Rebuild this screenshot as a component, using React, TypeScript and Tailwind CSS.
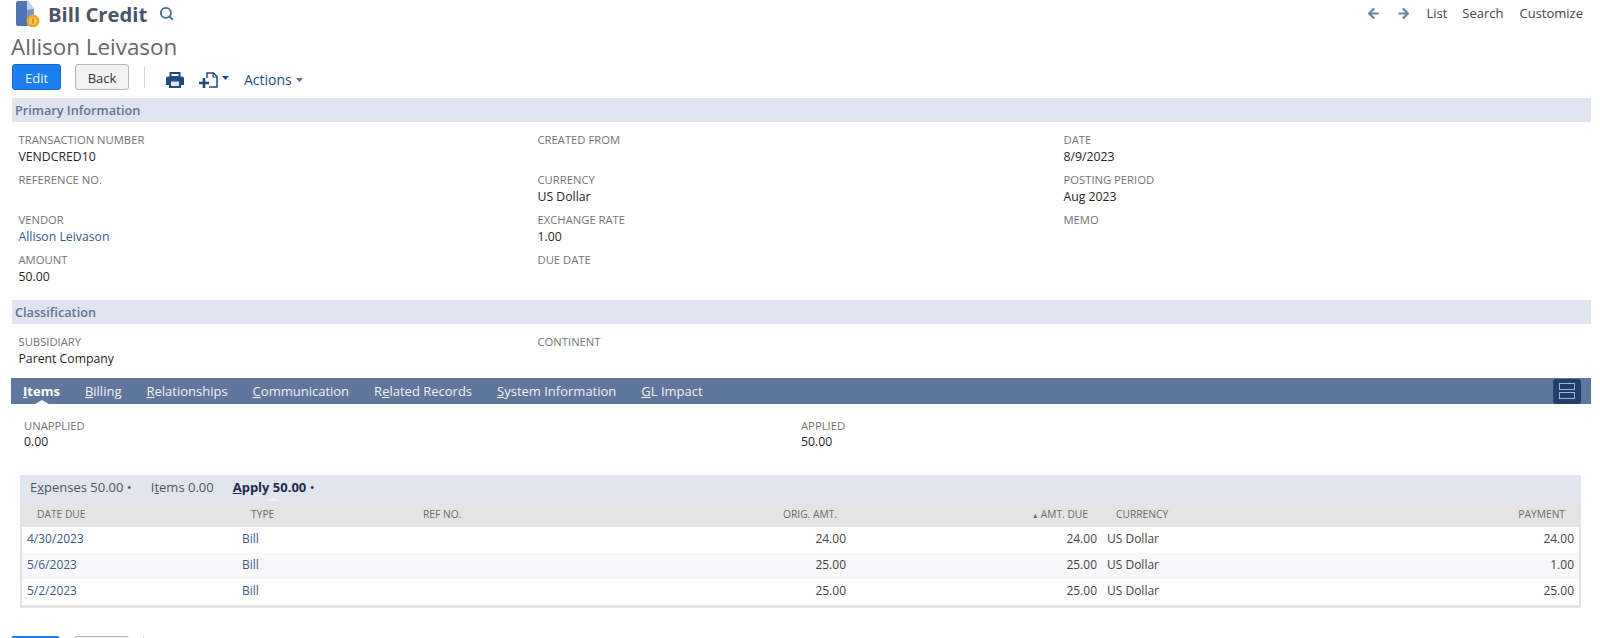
import { Search, ArrowLeft, ArrowRight } from "lucide-react"

const font = { fontFamily: '"Open Sans", sans-serif' }

function Field({ label, value, link }: { label: string; value?: string; link?: boolean }) {
  return (
    <div className="h-10 pt-[10px]">
      <div className="text-[11.25px] leading-[16px] text-[#737373] uppercase">{label}</div>
      {value && <div className={"mt-px text-[12.25px] leading-[16px] " + (link ? "text-[#2f5a94]" : "text-[#262626]")}>{value}</div>}
    </div>
  )
}

function SectionBar({ title }: { title: string }) {
  return (
    <div className="h-6 ml-3 mr-[9px] pl-[3px] bg-[#e0e4ef] text-[12.7px] leading-6 font-semibold text-[#5f7397]">{title}</div>
  )
}

function Tab({ first, rest, pre, active }: { pre?: string; first: string; rest: string; active?: boolean }) {
  return (
    <span className={"text-[13px] leading-[26px] " + (active ? "font-bold text-white" : "text-[#f0f3f8]")}>
      {pre}<u>{first}</u>{rest}
    </span>
  )
}

function DocIcon() {
  return (
    <svg width="24" height="26" viewBox="0 0 24 26">
      <path d="M0 2a2 2 0 0 1 2-2h9v25H2a2 2 0 0 1-2-2z" fill="#4f76b3" />
      <path d="M11 0h1l6 8v8l-5 9h-2z" fill="#7297cc" />
      <path d="M11 0h1l6 8-7 1z" fill="#c6d2e6" />
      <circle cx="17" cy="20" r="6.500" fill="#f0a623" />
      <circle cx="17" cy="20" r="4" fill="#f7c155" />
      <rect x="16" y="17" width="2" height="6" rx="1" fill="#e8981a" />
    </svg>
  )
}

function PrinterIcon() {
  return (
    <svg width="18" height="16" viewBox="0 0 18 16">
      <path d="M4.500 1h9v4h-9z" fill="none" stroke="#1f4a85" strokeWidth="2" />
      <path d="M2 4.500h14a2 2 0 0 1 2 2V13h-3v3H3v-3H0V6.500a2 2 0 0 1 2-2z" fill="#1f4a85" />
      <rect x="5" y="9.500" width="8" height="4.500" fill="#dfe6f1" />
    </svg>
  )
}

function NewDocIcon() {
  return (
    <svg width="20" height="16" viewBox="0 0 20 16" fill="none" stroke="#1f4a85">
      <path d="M8 6V1h6.500L18 4.500V15H10" strokeWidth="1.500" />
      <path d="M14 1v4h4" strokeWidth="1.200" />
      <path d="M0 11h10M5 6v10" strokeWidth="2.600" />
    </svg>
  )
}

function Caret({ color = "#1f4a85" }: { color?: string }) {
  return (
    <svg width="7" height="4" viewBox="0 0 7 4"><path d="M0 0h7L3.500 4z" fill={color} /></svg>
  )
}

const rows = [
  { date: "4/30/2023", orig: "24.00", due: "24.00", pay: "24.00" },
  { date: "5/6/2023", orig: "25.00", due: "25.00", pay: "1.00" },
  { date: "5/2/2023", orig: "25.00", due: "25.00", pay: "25.00" },
]

export default function App() {
  return (
    <div className="h-[638px] overflow-hidden bg-white" style={font}>
      <div className="flex items-center justify-between h-[27px] pl-4 pr-[17px]">
        <div className="flex items-center">
          <DocIcon />
          <span className="ml-2 text-[20.25px] leading-[24px] font-bold text-[#4a5568]">Bill Credit</span>
          <Search size={15} strokeWidth={3} className="ml-3 text-[#45699b]" />
        </div>
        <div className="flex items-center text-[13px] text-[#444]">
          <ArrowLeft size={15} strokeWidth={3.5} className="text-[#6a84a8]" />
          <ArrowRight size={15} strokeWidth={3.5} className="ml-[15px] text-[#6a84a8]" />
          <span className="ml-[15px]">List</span>
          <span className="ml-[15px]">Search</span>
          <span className="ml-4">Customize</span>
        </div>
      </div>

      <div className="h-[37px] pl-[11px] text-[22.4px] leading-[40px] text-[#666]">Allison Leivason</div>

      <div className="flex items-center h-[34px] pl-3 pb-2">
        <button className="w-[49px] h-[26px] pt-[3px] rounded-[3px] bg-[#1b7ff0] border border-[#1467c9] text-[13px] font-medium text-[#e8f2ff]">Edit</button>
        <button className="ml-[14px] w-[54px] h-[26px] pt-[3px] rounded-[3px] bg-[#f2f2f2] border border-[#b5b5b5] text-[13px] font-medium text-[#333]">Back</button>
        <div className="ml-[15px] w-px h-[22px] bg-[#d5d5d5]" />
        <div className="flex items-center h-full pt-[5px]">
          <div className="ml-[21px]"><PrinterIcon /></div>
          <div className="ml-[15px]"><NewDocIcon /></div>
          <div className="ml-[3px] mb-[3px]"><Caret /></div>
          <span className="ml-[15px] text-[14px] font-medium text-[#1f4a85]">Actions</span>
          <div className="ml-1"><Caret color="#5a6a8a" /></div>
        </div>
      </div>

      <SectionBar title="Primary Information" />
      <div className="grid grid-cols-[519px_526px_1fr] pl-[18.5px] h-[178px]">
        <div>
          <Field label="Transaction Number" value="VENDCRED10" />
          <Field label="Reference No." />
          <Field label="Vendor" value="Allison Leivason" link />
          <Field label="Amount" value="50.00" />
        </div>
        <div>
          <Field label="Created From" />
          <Field label="Currency" value="US Dollar" />
          <Field label="Exchange Rate" value="1.00" />
          <Field label="Due Date" />
        </div>
        <div>
          <Field label="Date" value="8/9/2023" />
          <Field label="Posting Period" value="Aug 2023" />
          <Field label="Memo" />
        </div>
      </div>

      <SectionBar title="Classification" />
      <div className="grid grid-cols-[519px_1fr] pl-[18.5px] h-[54px]">
        <Field label="Subsidiary" value="Parent Company" />
        <Field label="Continent" />
      </div>

      <div className="relative flex items-center gap-[25px] h-[26px] ml-[11px] mr-[9px] pl-3 bg-[#60769c]">
        <Tab first="I" rest="tems" active />
        <Tab first="B" rest="illing" />
        <Tab first="R" rest="elationships" />
        <Tab first="C" rest="ommunication" />
        <Tab pre="R" first="e" rest="lated Records" />
        <Tab first="S" rest="ystem Information" />
        <Tab first="G" rest="L Impact" />
        <div className="absolute left-6 bottom-0 w-0 h-0 border-x-[7px] border-x-transparent border-b-4 border-b-white" />
        <div className="ml-auto mr-[10px] flex flex-col items-center justify-center gap-[2px] w-7 h-[25px] rounded-[3px] bg-[#243c68]">
          <div className="w-4 h-[7px] border border-[#a3b3cf]" />
          <div className="w-4 h-[7px] border border-[#a3b3cf]" />
        </div>
      </div>

      <div className="grid grid-cols-[777px_1fr] pl-6 h-[71px] pt-[14px]">
        <div>
          <div className="text-[11.25px] leading-[16px] text-[#737373]">UNAPPLIED</div>
          <div className="text-[12.25px] leading-[16px] text-[#262626]">0.00</div>
        </div>
        <div>
          <div className="text-[11.25px] leading-[16px] text-[#737373]">APPLIED</div>
          <div className="text-[12.25px] leading-[16px] text-[#262626]">50.00</div>
        </div>
      </div>

      <div className="ml-5 mr-[19px]">
        <div className="relative flex items-center h-[26px] pl-[10px] bg-[#e1e5ee] text-[13px] text-[#4f5560]">
          <span>E<u>x</u>penses 50.00 •</span>
          <span className="ml-[19px]">I<u>t</u>ems 0.00</span>
          <span className="ml-[19px] font-bold text-[#1f2a4d]"><u>A</u>pply 50.00 <span className="font-normal">•</span></span>
          <div className="absolute left-[243px] bottom-0 w-0 h-0 border-x-[10px] border-x-transparent border-b-[3px] border-b-[#eef0f5]" />
        </div>
        <div className="border-x-2 border-b-[3px] border-[#e3e3e6]">
          <table className="w-full table-fixed">
            <colgroup>
              <col className="w-[215px]" />
              <col className="w-[172px]" />
              <col className="w-[200px]" />
              <col className="w-[241px]" />
              <col className="w-[251px]" />
              <col className="w-[199px]" />
              <col />
            </colgroup>
            <thead>
              <tr className="h-[26px] bg-[#e4e4e4] text-[10.25px] font-normal text-[#6b6b6b]">
                <th className="pl-[15px] pt-px text-left font-normal">DATE DUE</th>
                <th className="pl-[14px] pt-px text-left font-normal">TYPE</th>
                <th className="pl-[14px] pt-px text-left font-normal">REF NO.</th>
                <th className="pr-[13px] pt-px text-right font-normal">ORIG. AMT.</th>
                <th className="pr-[13px] pt-px text-right font-normal"><span className="text-[7px] mr-[2px]">▲</span>AMT. DUE</th>
                <th className="pl-[15px] pt-px text-left font-normal">CURRENCY</th>
                <th className="pr-[14px] pt-px text-right font-normal">PAYMENT</th>
              </tr>
            </thead>
            <tbody>
              {rows.map((r, i) => (
                <tr key={r.date} className={"h-[26px] text-[12px] leading-[22px] text-[#444] " + (i === 1 ? "bg-[#f8f8fb]" : "bg-white")}>
                  <td className="pl-[5px] pb-[3px] text-[#3c5a8a]">{r.date}</td>
                  <td className="pl-[5px] pb-[3px] text-[#3c5a8a]">Bill</td>
                  <td />
                  <td className="pr-1 pb-[3px] text-right">{r.orig}</td>
                  <td className="pr-1 pb-[3px] text-right">{r.due}</td>
                  <td className="pl-[6px] pb-[3px]">US Dollar</td>
                  <td className="pr-[5px] pb-[3px] text-right">{r.pay}</td>
                </tr>
              ))}
            </tbody>
          </table>
        </div>
      </div>

      <div className="flex items-start mt-7 pl-[11px]">
        <div className="w-[49px] h-[26px] rounded-[3px] bg-[#1b7ff0]" />
        <div className="ml-[14px] w-[55px] h-[26px] rounded-[3px] bg-[#f2f2f2] border border-[#b5b5b5]" />
        <div className="ml-[14px] w-px h-[22px] bg-[#d5d5d5]" />
      </div>
    </div>
  )
}
